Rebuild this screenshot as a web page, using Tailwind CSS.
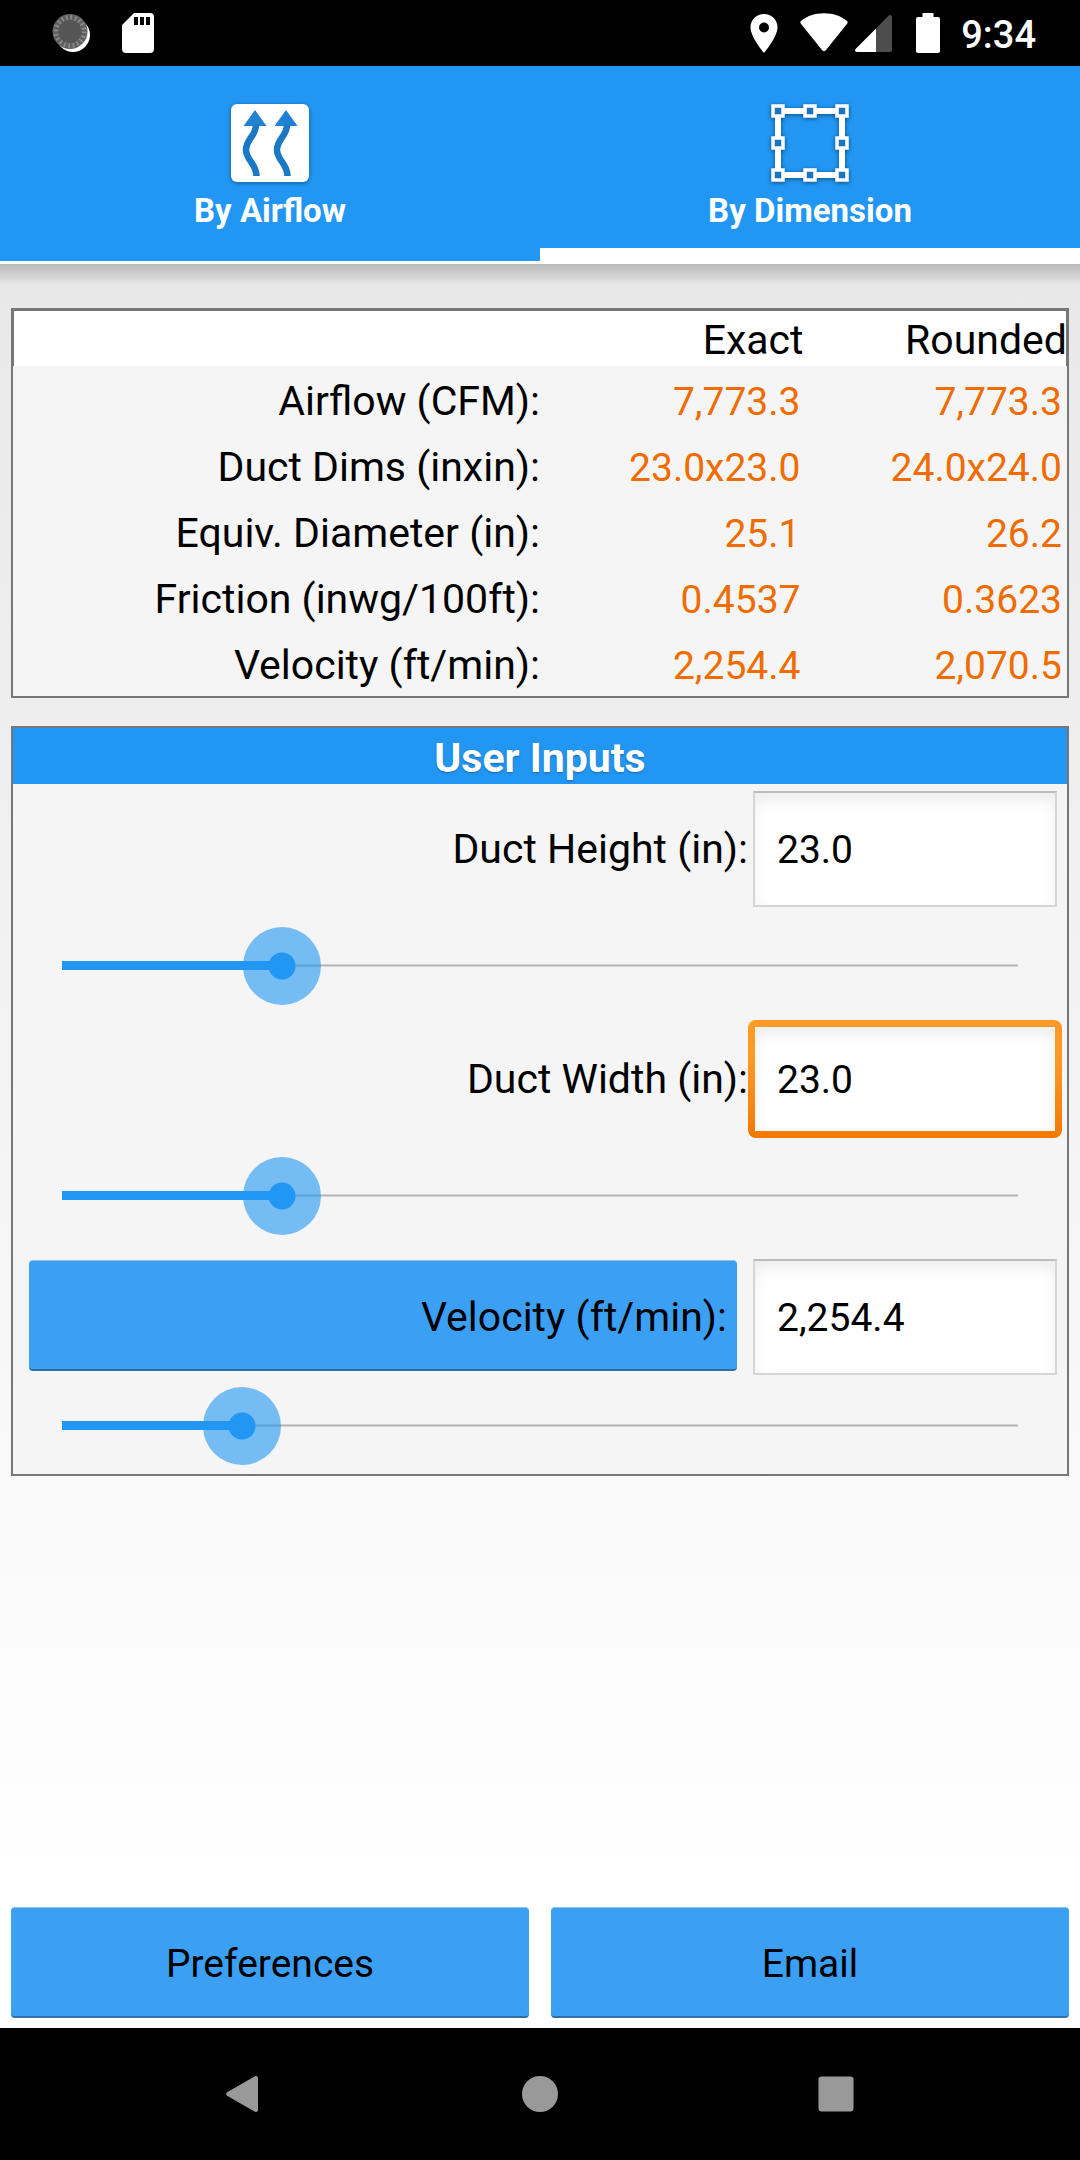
<!DOCTYPE html>
<html lang="en">
<head>
    <meta charset="UTF-8">
    <meta name="viewport" content="width=device-width, initial-scale=1.0">
    <title>Duct Calculator - By Dimension</title>
    <script src="https://cdn.jsdelivr.net/npm/@tailwindcss/browser@4"></script>
</head>
<body class="font-[Roboto,sans-serif] text-black">
    <div class="min-h-screen flex flex-col bg-white">

        <!-- Status bar -->
        <header class="h-[66px] bg-black flex items-center justify-between pl-[52px] pr-11">
            <div class="flex items-center gap-[31px]">
                <svg class="w-[39px] h-10" viewBox="0 0 39 40" aria-hidden="true">
                    <circle cx="21" cy="22" r="17" fill="#fff"/>
                    <circle cx="18" cy="18.500" r="17.500" fill="#606060"/>
                    <circle cx="18" cy="18.500" r="14" fill="none" stroke="#8c8c8c" stroke-width="5" stroke-dasharray="1.600 2.798"/>
                    <circle cx="18" cy="18.500" r="11.500" fill="#555"/>
                </svg>
                <svg class="w-8 h-10" viewBox="0 0 32 40" aria-hidden="true">
                    <path fill="#fff" fill-rule="evenodd" d="M12 0h16a4 4 0 0 1 4 4v32a4 4 0 0 1-4 4H4a4 4 0 0 1-4-4V12zM12 4v8h4V4zM18 4v8h4V4zM24 4v8h4V4z"/>
                </svg>
            </div>
            <div class="flex items-center">
                <svg class="w-7 h-10 mr-[22px]" viewBox="0 0 28 40" aria-hidden="true">
                    <path fill="#fff" fill-rule="evenodd" d="M14 1C6.500 1 .5 6.800.5 14.300.5 24.300 14 40 14 40s13.500-15.700 13.500-25.700C27.500 6.800 21.500 1 14 1zm0 8.500a5 5 0 1 1 0 10 5 5 0 0 1 0-10z"/>
                </svg>
                <svg class="w-12 h-10 mr-[7px]" viewBox="0 0 48 40" aria-hidden="true">
                    <path fill="#fff" d="M1 8C7 3 15 .3 24 .3S41 3 47 8c.8.7.8 1.600.3 2.400L26 37c-1.200 1.500-2.800 1.500-4 0L.7 10.400C.2 9.600.2 8.700 1 8z"/>
                </svg>
                <svg class="w-[37px] h-10 mr-6" viewBox="0 0 37 40" aria-hidden="true">
                    <path fill="#fff" d="M21 15.500V39H2c-2 0-2.500-2-1.200-3.300z"/>
                    <path fill="#4d4d4d" d="M21 15.500 33.500 2.800C35 1.300 37 2 37 4v33a2 2 0 0 1-2 2H21z"/>
                </svg>
                <svg class="w-6 h-10 mr-[21px]" viewBox="0 0 24 40" aria-hidden="true">
                    <path fill="#fff" d="M6.500 0h11v4H22a2 2 0 0 1 2 2v32a2 2 0 0 1-2 2H2a2 2 0 0 1-2-2V6a2 2 0 0 1 2-2h4.500z"/>
                </svg>
                <span class="text-[38px] leading-10 font-medium text-white pt-1">9:34</span>
            </div>
        </header>

        <!-- Tabs -->
        <nav class="h-[198px] flex bg-[#2196f3] text-white text-[33px] leading-10 font-bold">
            <button type="button" class="flex-1 flex flex-col items-center gap-[9px] pt-[38px] border-b-[3px] border-white">
                <svg class="w-[78px] h-[78px] overflow-visible drop-shadow-[0_1px_2px_rgba(0,0,0,0.4)]" viewBox="0 0 78 78" aria-hidden="true">
                    <rect width="78" height="78" rx="6" fill="#fff"/>
                    <g fill="#1f82d2">
                        <path d="M24 6 35.500 22H12.500z"/>
                        <path d="M55 6 66.500 22H43.500z"/>
                    </g>
                    <g fill="none" stroke="#1b78c4" stroke-width="6.500">
                        <path d="M25 21c0 11-10 14-10 25 0 10 10.500 14 10.500 26"/>
                        <path d="M56 21c0 11-10 14-10 25 0 10 10.500 14 10.500 26"/>
                    </g>
                </svg>
                By Airflow
            </button>
            <button type="button" class="flex-1 flex flex-col items-center gap-[9px] pt-[38px] border-b-16 border-white">
                <svg class="w-[78px] h-[78px] overflow-visible drop-shadow-[0_1px_2px_rgba(0,0,0,0.5)]" viewBox="0 0 78 78" aria-hidden="true">
                    <rect x="7" y="7" width="64" height="64" fill="none" stroke="#fff" stroke-width="6"/>
                    <g fill="#1b74bd" stroke="#fff" stroke-width="3.500">
                        <rect x="2" y="2" width="10" height="10"/>
                        <rect x="34" y="2" width="10" height="10"/>
                        <rect x="66" y="2" width="10" height="10"/>
                        <rect x="2" y="34" width="10" height="10"/>
                        <rect x="66" y="34" width="10" height="10"/>
                        <rect x="2" y="66" width="10" height="10"/>
                        <rect x="34" y="66" width="10" height="10"/>
                        <rect x="66" y="66" width="10" height="10"/>
                    </g>
                </svg>
                By Dimension
            </button>
        </nav>

        <main class="flex-1 flex flex-col bg-linear-to-b from-[#e8e8e8] to-white">
            <div class="h-[22px] bg-linear-to-b from-black/20 to-transparent"></div>

            <!-- Results -->
            <section class="mx-[11px] mt-[22px] border-2 border-[#777] bg-[#f5f5f5]">
                <table class="w-full table-fixed text-right text-[41px] leading-12">
                    <thead>
                        <tr class="h-14 bg-white shadow-[inset_1px_1px_0_#777,inset_-1px_0_0_#777]">
                            <td class="w-1/2"></td>
                            <th scope="col" class="w-1/4 pt-1 font-normal">Exact</th>
                            <th scope="col" class="w-1/4 pt-1 font-normal">Rounded</th>
                        </tr>
                    </thead>
                    <tbody>
                        <tr class="h-[66px]">
                            <th scope="row" class="pt-1 font-normal">Airflow (CFM):</th>
                            <td class="pt-1.5 pr-[3px] text-[39px] text-[#ef6c00]">7,773.3</td>
                            <td class="pt-1.5 pr-[5px] text-[39px] text-[#ef6c00]">7,773.3</td>
                        </tr>
                        <tr class="h-[66px]">
                            <th scope="row" class="pt-1 font-normal">Duct Dims (inxin):</th>
                            <td class="pt-1.5 pr-[3px] text-[39px] text-[#ef6c00]">23.0x23.0</td>
                            <td class="pt-1.5 pr-[5px] text-[39px] text-[#ef6c00]">24.0x24.0</td>
                        </tr>
                        <tr class="h-[66px]">
                            <th scope="row" class="pt-1 font-normal">Equiv. Diameter (in):</th>
                            <td class="pt-1.5 pr-[3px] text-[39px] text-[#ef6c00]">25.1</td>
                            <td class="pt-1.5 pr-[5px] text-[39px] text-[#ef6c00]">26.2</td>
                        </tr>
                        <tr class="h-[66px]">
                            <th scope="row" class="pt-1 font-normal">Friction (inwg/100ft):</th>
                            <td class="pt-1.5 pr-[3px] text-[39px] text-[#ef6c00]">0.4537</td>
                            <td class="pt-1.5 pr-[5px] text-[39px] text-[#ef6c00]">0.3623</td>
                        </tr>
                        <tr class="h-[66px]">
                            <th scope="row" class="pt-1 font-normal">Velocity (ft/min):</th>
                            <td class="pt-1.5 pr-[3px] text-[39px] text-[#ef6c00]">2,254.4</td>
                            <td class="pt-1.5 pr-[5px] text-[39px] text-[#ef6c00]">2,070.5</td>
                        </tr>
                    </tbody>
                </table>
            </section>

            <!-- Inputs -->
            <section class="mx-[11px] mt-7 border-2 border-[#777] bg-[#f5f5f5] text-[41px] leading-12">
                <h2 class="h-14 pt-1.5 bg-[#2196f3] text-white text-center font-bold text-shadow-[0_1px_2px_rgba(0,0,0,0.3)]">User Inputs</h2>

                <div class="h-[133px] pt-1.5 pr-[5px] grid grid-cols-[1fr_314px] items-start">
                    <label for="height" class="h-[118px] flex items-center justify-end">Duct Height (in):</label>
                    <div class="h-[118px] px-[5px] py-px">
                        <input id="height" type="text" value="23.0" class="w-full h-full pl-[22px] pt-0.5 bg-white border-2 border-[#d5d5d5] border-t-[#bdbdbd] text-[39px] outline-none shadow-[inset_0_8px_14px_rgba(0,0,0,0.07)]">
                    </div>
                </div>
                <div class="h-[97px] px-[49px] grid items-center">
                    <div class="[grid-area:1/1] h-[3px] bg-[#b5b5b5] border-t border-b border-[#d4d4d4]"></div>
                    <div class="[grid-area:1/1] h-[9px] bg-[#2196f3]" style="width: 23%"></div>
                    <input type="range" min="0" max="100" step="0.1" value="23" aria-label="Duct Height" class="[grid-area:1/1] h-[78px] -mx-[39px] appearance-none bg-transparent outline-none [&::-webkit-slider-thumb]:appearance-none [&::-webkit-slider-thumb]:w-[78px] [&::-webkit-slider-thumb]:h-[78px] [&::-webkit-slider-thumb]:rounded-full [&::-webkit-slider-thumb]:bg-[radial-gradient(circle,#2196f3_13px,#2196f399_14px)]">
                </div>

                <div class="h-[133px] pt-1.5 pr-[5px] grid grid-cols-[1fr_314px] items-start">
                    <label for="width" class="h-[118px] flex items-center justify-end">Duct Width (in):</label>
                    <div class="h-[118px] p-[7px] rounded-lg bg-linear-to-b from-[#ff9a26] from-30% to-[#f27900]">
                        <input id="width" type="text" value="23.0" class="w-full h-full pl-[22px] pt-0.5 bg-white text-[39px] outline-none shadow-[inset_0_8px_14px_rgba(0,0,0,0.07)]">
                    </div>
                </div>
                <div class="h-[97px] px-[49px] grid items-center">
                    <div class="[grid-area:1/1] h-[3px] bg-[#b5b5b5] border-t border-b border-[#d4d4d4]"></div>
                    <div class="[grid-area:1/1] h-[9px] bg-[#2196f3]" style="width: 23%"></div>
                    <input type="range" min="0" max="100" step="0.1" value="23" aria-label="Duct Width" class="[grid-area:1/1] h-[78px] -mx-[39px] appearance-none bg-transparent outline-none [&::-webkit-slider-thumb]:appearance-none [&::-webkit-slider-thumb]:w-[78px] [&::-webkit-slider-thumb]:h-[78px] [&::-webkit-slider-thumb]:rounded-full [&::-webkit-slider-thumb]:bg-[radial-gradient(circle,#2196f3_13px,#2196f399_14px)]">
                </div>

                <div class="h-[133px] pt-3.5 pr-[5px] grid grid-cols-[1fr_314px] items-start">
                    <div class="h-[118px] pl-4 pr-[11px] pt-0.5 pb-[5px]">
                        <button type="button" id="velocity-mode" class="w-full h-full pr-2.5 pt-1 rounded-sm text-right bg-[#3ba0f4] border-t border-b-2 border-t-[#8fc0ea] border-b-[#2f6ea6]">Velocity (ft/min):</button>
                    </div>
                    <div class="h-[118px] px-[5px] py-px">
                        <input type="text" value="2,254.4" aria-labelledby="velocity-mode" class="w-full h-full pl-[22px] pt-0.5 bg-white border-2 border-[#d5d5d5] border-t-[#bdbdbd] text-[39px] outline-none shadow-[inset_0_8px_14px_rgba(0,0,0,0.07)]">
                    </div>
                </div>
                <div class="h-[97px] px-[49px] grid items-center">
                    <div class="[grid-area:1/1] h-[3px] bg-[#b5b5b5] border-t border-b border-[#d4d4d4]"></div>
                    <div class="[grid-area:1/1] h-[9px] bg-[#2196f3]" style="width: 18.8%"></div>
                    <input type="range" min="0" max="12000" step="0.1" value="2254.4" aria-label="Velocity" class="[grid-area:1/1] h-[78px] -mx-[39px] appearance-none bg-transparent outline-none [&::-webkit-slider-thumb]:appearance-none [&::-webkit-slider-thumb]:w-[78px] [&::-webkit-slider-thumb]:h-[78px] [&::-webkit-slider-thumb]:rounded-full [&::-webkit-slider-thumb]:bg-[radial-gradient(circle,#2196f3_13px,#2196f399_14px)]">
                </div>
            </section>
        </main>

        <!-- Actions -->
        <div class="grid grid-cols-2 gap-[22px] px-[11px] pt-3 pb-2.5 text-[39px]">
            <button type="button" class="h-[111px] pt-1 rounded-sm bg-[#3ba0f4] border-t border-b-2 border-t-[#8fc0ea] border-b-[#2f6ea6]">Preferences</button>
            <button type="button" class="h-[111px] pt-1 rounded-sm bg-[#3ba0f4] border-t border-b-2 border-t-[#8fc0ea] border-b-[#2f6ea6]">Email</button>
        </div>

        <!-- System navigation -->
        <footer class="h-[132px] bg-black flex items-center justify-center gap-60">
            <button type="button" aria-label="Back" class="w-14 flex justify-center">
                <svg class="w-9 h-9" viewBox="0 0 36 36"><path fill="#999" d="M1.500 16 28.500.4C30.300-.6 32 .4 32 2v32c0 1.600-1.700 2.600-3.500 1.600L1.500 20C-.4 19-.4 17 1.500 16z"/></svg>
            </button>
            <button type="button" aria-label="Home" class="w-14 flex justify-center">
                <svg class="w-9 h-9" viewBox="0 0 36 36"><circle cx="18" cy="18" r="18" fill="#999"/></svg>
            </button>
            <button type="button" aria-label="Recents" class="w-14 flex justify-center">
                <svg class="w-9 h-9" viewBox="0 0 36 36"><rect x=".5" y=".5" width="35" height="35" rx="3" fill="#999"/></svg>
            </button>
        </footer>
    </div>
</body>
</html>
